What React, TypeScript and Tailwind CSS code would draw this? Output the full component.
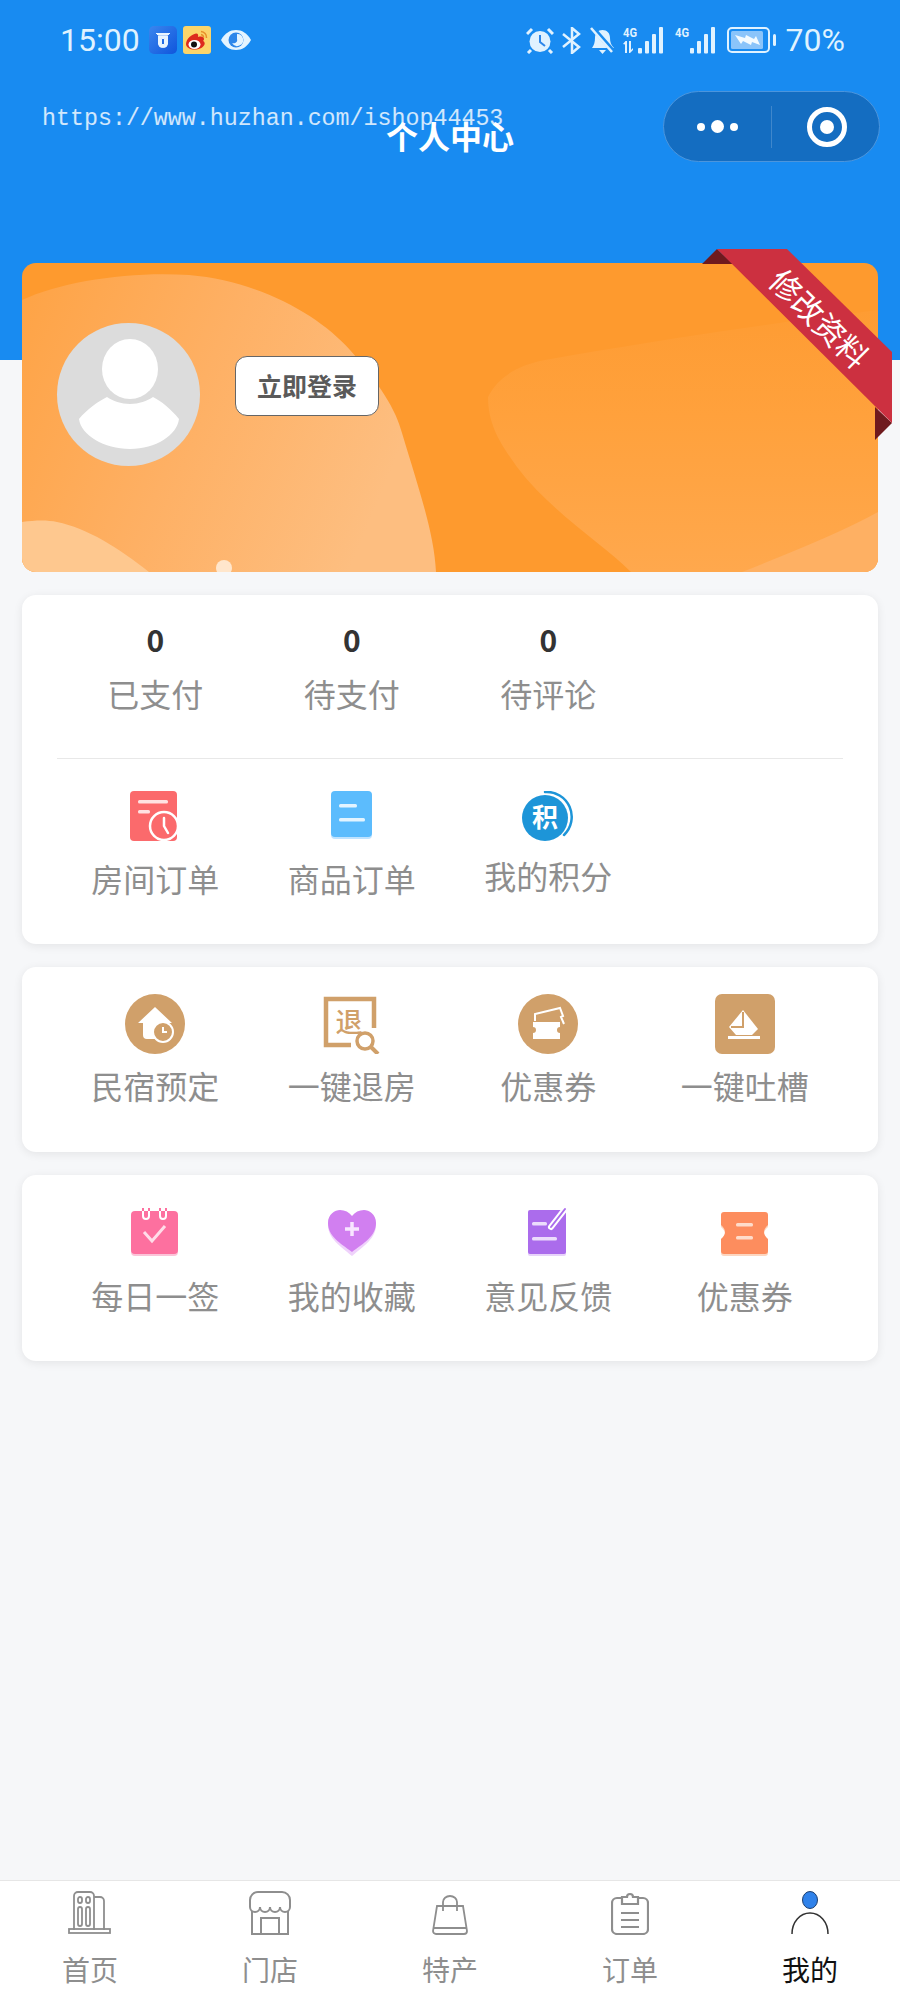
import React from "react";

const cjk = `font-['Noto_Sans_CJK_SC','Noto_Sans',sans-serif]`;

// --- status bar icons ---
const AppBadge = () => (
  <svg width="28" height="28" viewBox="0 0 28 28">
    <defs>
      <linearGradient id="appg" x1="0" y1="0" x2="1" y2="1">
        <stop offset="0" stopColor="#3a86ee" />
        <stop offset="1" stopColor="#0f55dc" />
      </linearGradient>
    </defs>
    <rect width="28" height="28" rx="5" fill="url(#appg)" />
    <path d="M7 7l2 2h10l2-2M9.500 10h9v8a4 4 0 0 1-4 3.500h-1a4 4 0 0 1-4-3.500zM12.500 12.500v6h3v-6z" fill="#e8f5ff" fillRule="evenodd" stroke="#e8f5ff" strokeWidth="1" />
  </svg>
);

const WeiboBadge = () => (
  <svg width="28" height="28" viewBox="0 0 28 28">
    <rect width="28" height="28" rx="3" fill="#fbd56a" />
    <path d="M3 18c0-5 6-10 10-10.500 2-.2 2.500 1.500 2 3.500 3-1 6-.5 6 2 0 1-1 2-1 2 1.500.5 2 2 1.500 3.500-1 3-5.500 5-10 5-4.500 0-8.500-2-8.500-5.500z" fill="#dd2a1d" />
    <ellipse cx="11.500" cy="18.500" rx="6" ry="4.500" fill="#fff" />
    <circle cx="11" cy="18.500" r="3" fill="#111" />
    <path d="M18 5.500a6 6 0 0 1 5.500 6.500M18 8.500a3 3 0 0 1 2.500 3" fill="none" stroke="#e8902a" strokeWidth="1.500" />
  </svg>
);

const EyeIcon = () => (
  <svg width="32" height="22" viewBox="0 0 32 22">
    <path d="M1 11C5 4 10 1 16 1s11 3 15 10c-4 7-9 10-15 10S5 18 1 11z" fill="#e4f4ff" />
    <circle cx="16" cy="11" r="7.500" fill="#2c86ea" />
    <path d="M17 5a6 6 0 1 1-5 9c3 1 6-1 5-4z" fill="#e4f4ff" />
  </svg>
);

const AlarmIcon = () => (
  <svg width="28" height="27" viewBox="0 0 28 27">
    <circle cx="14" cy="14.500" r="10.500" fill="#e0f2ff" />
    <path d="M14 8v7l5 4" fill="none" stroke="#2c86ea" strokeWidth="2" />
    <path d="M1 7l5-5M27 7l-5-5M5 23l-3 3M23 23l3 3" stroke="#e0f2ff" strokeWidth="3" />
  </svg>
);

const BluetoothIcon = () => (
  <svg width="20" height="27" viewBox="0 0 20 27" fill="none" stroke="#e0f2ff" strokeWidth="2.500">
    <path d="M1 7l16 13-7 6V1l7 6L1 20" />
  </svg>
);

const BellOffIcon = () => (
  <svg width="25" height="27" viewBox="0 0 25 27">
    <path d="M2 21c2-3 3-6 3-10 0-5 3-8 7.500-8s7.500 3 7.500 8c0 4 1 7 4 10z" fill="#e0f2ff" />
    <path d="M9 23h7l-3.500 4z" fill="#e0f2ff" />
    <path d="M2 0l21 24" stroke="#1a8cf0" strokeWidth="4.500" />
    <path d="M1 1l21 24" stroke="#e0f2ff" strokeWidth="2.500" />
  </svg>
);

const SignalIcon = ({ arrows }: { arrows?: boolean }) => (
  <svg width="43" height="28" viewBox="0 0 43 28" fill="#e0f2ff">
    <text x="0" y="11" fontSize="13" fontWeight="700" textLength="14" lengthAdjust="spacingAndGlyphs" fontFamily="Roboto, sans-serif">4G</text>
    {arrows && <path d="M0 18l2.500-3h1.500v12H2V18.500zM6 15h2v9l2-2v2l-3 3H6z" />}
    <rect x="15" y="22" width="4" height="5.500" rx="1" />
    <rect x="22" y="15" width="4" height="12.500" rx="1" />
    <rect x="29" y="8" width="4" height="19.500" rx="1" />
    <rect x="36" y="1" width="4" height="26.500" rx="1" />
  </svg>
);

const BatteryIcon = () => (
  <svg width="50" height="26" viewBox="0 0 50 26">
    <rect x="1" y="1" width="41" height="24" rx="4" fill="none" stroke="#e0f2ff" strokeWidth="2" />
    <rect x="4" y="4" width="32" height="18" rx="1.500" fill="#8ac4fa" />
    <path d="M8 8l10 3 1-3 8 4 2-3 4 9-8-3-1 3-8-4-2 3z" fill="#f4fbff" />
    <rect x="46" y="7" width="3" height="12" rx="1.500" fill="#e0f2ff" />
  </svg>
);

// --- menu icons ---
const RoomOrderIcon = () => (
  <svg width="50" height="50" viewBox="0 0 50 50">
    <rect width="47" height="50" rx="4" fill="#fb6a6c" />
    <rect x="8" y="9" width="30" height="3.500" rx="1.500" fill="#ffe2e2" />
    <rect x="8" y="19" width="12" height="3.500" rx="1.500" fill="#ffe2e2" />
    <circle cx="34" cy="35" r="14" fill="#fb6a6c" stroke="#fff" strokeWidth="2.500" />
    <path d="M34 27v8l4 7" fill="none" stroke="#fff" strokeWidth="2.500" strokeLinecap="round" />
  </svg>
);

const GoodsOrderIcon = () => (
  <svg width="41" height="48" viewBox="0 0 41 48">
    <rect y="2" width="41" height="46" rx="4" fill="#bfe3ff" />
    <rect width="41" height="46" rx="4" fill="#5cbcfd" />
    <rect x="8" y="13" width="18" height="3.500" rx="1.500" fill="#e3f4ff" />
    <rect x="8" y="27" width="26" height="3.500" rx="1.500" fill="#e3f4ff" />
  </svg>
);

const PointsIcon = () => (
  <svg width="54" height="52" viewBox="0 0 54 52">
    <circle cx="24" cy="27" r="23" fill="#1d95d8" />
    <path d="M24 1a25 25 0 0 1 19 43" fill="none" stroke="#1d95d8" strokeWidth="2.500" strokeLinecap="round" />
    <text x="24" y="36" textAnchor="middle" fontSize="26" fontWeight="700" fill="#fff" fontFamily="'Noto Sans CJK SC', sans-serif">积</text>
  </svg>
);

const HomeStayIcon = () => (
  <svg width="60" height="60" viewBox="0 0 60 60">
    <circle cx="30" cy="30" r="30" fill="#d0a06a" />
    <path d="M30 13L13 29h5v12a4 4 0 0 0 4 4h16V29h9z" fill="#fff" />
    <circle cx="38" cy="38" r="10" fill="#d0a06a" stroke="#fff" strokeWidth="2" />
    <path d="M38 33v5h4" fill="none" stroke="#fff" strokeWidth="2" />
  </svg>
);

const CheckoutIcon = () => (
  <svg width="58" height="60" viewBox="0 0 58 60">
    <path d="M28 51H3V5h48v29" fill="none" stroke="#d0a06a" strokeWidth="4.500" />
    <text x="26" y="38" textAnchor="middle" fontSize="27" fill="#d0a06a" fontWeight="500" fontFamily="'Noto Sans CJK SC', sans-serif">退</text>
    <circle cx="42" cy="47" r="8" fill="none" stroke="#d0a06a" strokeWidth="3.500" />
    <path d="M48 53l7 7" stroke="#d0a06a" strokeWidth="4" />
  </svg>
);

const CouponRoundIcon = () => (
  <svg width="60" height="60" viewBox="0 0 60 60">
    <circle cx="30" cy="30" r="30" fill="#d0a06a" />
    <path d="M17 27v-7l25-6 3 8-2 1 3 7" fill="none" stroke="#fff" strokeWidth="2" />
    <path d="M15 28h27v5a3 3 0 0 0 0 6v6H15v-6a3 3 0 0 0 0-6z" fill="#fff" />
  </svg>
);

const FeedbackBoatIcon = () => (
  <svg width="60" height="60" viewBox="0 0 60 60">
    <rect width="60" height="60" rx="7" fill="#d0a06a" />
    <path d="M28 16l15 19-6 6H21l-7-8z" fill="#fff" />
    <path d="M28 18v15H16" fill="none" stroke="#d0a06a" strokeWidth="2" />
    <rect x="13" y="42" width="32" height="3" fill="#fff" />
  </svg>
);

const SignInIcon = () => (
  <svg width="48" height="48" viewBox="0 0 48 48">
    <rect y="6" width="47" height="42" rx="4" fill="#fbc4d8" />
    <rect y="3" width="47" height="43" rx="4" fill="#fd709f" />
    <path d="M12 0v8a3 3 0 0 0 6 0V0M29 0v8a3 3 0 0 0 6 0V0" fill="none" stroke="#fd709f" strokeWidth="2" />
    <path d="M12 3v5a3 3 0 0 0 6 0V3M29 3v5a3 3 0 0 0 6 0V3" fill="none" stroke="#fff" strokeWidth="2" />
    <path d="M13 24l8 9 13-15" fill="none" stroke="#ffdde9" strokeWidth="3" />
  </svg>
);

const FavoriteIcon = () => (
  <svg width="48" height="46" viewBox="0 0 48 46">
    <path d="M24 46C12 36 0 28 0 15 0 5 7 2 12 2c5 0 9 2 12 6 3-4 7-6 12-6 5 0 12 3 12 13 0 13-12 21-24 31z" fill="#efd2fb" />
    <path d="M24 42C12 33 0 26 0 13 0 4 7 0 12 0c5 0 9 2 12 6 3-4 7-6 12-6 5 0 12 4 12 13 0 13-12 20-24 29z" fill="#d17ff0" />
    <path d="M24 12v14M17 19h14" stroke="#f8e6ff" strokeWidth="3.500" />
  </svg>
);

const FeedbackIcon = () => (
  <svg width="40" height="49" viewBox="0 0 40 49">
    <rect y="5" width="38" height="44" rx="2" fill="#e7d3fa" />
    <rect y="3" width="38" height="44" rx="2" fill="#ab6cec" />
    <rect x="4" y="15" width="15" height="3.500" rx="1.500" fill="#ecdcfc" />
    <rect x="4" y="30" width="25" height="3.500" rx="1.500" fill="#ecdcfc" />
    <path d="M23 20L37 2" stroke="#fff" strokeWidth="6" strokeLinecap="round" />
    <path d="M23 20L37 2" stroke="#ab6cec" strokeWidth="2" strokeLinecap="round" />
  </svg>
);

const TicketIcon = () => (
  <svg width="49" height="44" viewBox="0 0 49 44">
    <path d="M4 2h41a3 3 0 0 1 3 3v10q-8 7 0 14v12a3 3 0 0 1-3 3H4a3 3 0 0 1-3-3V29q8-7 0-14V5a3 3 0 0 1 3-3z" fill="#fcd6c0" />
    <path d="M4 0h41a3 3 0 0 1 3 3v10q-8 7 0 14v12a3 3 0 0 1-3 3H4a3 3 0 0 1-3-3V27q8-7 0-14V3a3 3 0 0 1 3-3z" fill="#fd8d5e" />
    <rect x="16" y="11" width="17" height="3.500" rx="1.500" fill="#fedccb" />
    <rect x="16" y="24" width="17" height="3.500" rx="1.500" fill="#fedccb" />
  </svg>
);

// --- tab bar icons ---
const TabHome = () => (
  <svg width="44" height="44" viewBox="0 0 44 44" fill="none" stroke="#8e8e8e" strokeWidth="1.800">
    <path d="M6 39V5a4 4 0 0 1 4-4h12a4 4 0 0 1 4 4v34M26 6h6a4 4 0 0 1 4 4v29" />
    <rect x="1" y="38" width="41" height="4" />
    <rect x="10" y="6" width="4" height="6" rx="2" />
    <rect x="18" y="6" width="4" height="6" rx="2" />
    <rect x="10" y="16" width="4" height="19" rx="2" />
    <rect x="18" y="16" width="4" height="19" rx="2" />
  </svg>
);

const TabStore = () => (
  <svg width="44" height="44" viewBox="0 0 44 44" fill="none" stroke="#8e8e8e" strokeWidth="2">
    <path d="M2 16V9a8 8 0 0 1 8-8h24a8 8 0 0 1 8 8v7a5 5 0 0 1-10 0 5 5 0 0 1-10 0 5 5 0 0 1-10 0 5 5 0 0 1-10 0z" />
    <path d="M4 20v23h36V20M13 43V27h18v16" />
  </svg>
);

const TabBag = () => (
  <svg width="38" height="40" viewBox="0 0 38 40" fill="none" stroke="#8e8e8e" strokeWidth="1.800">
    <path d="M6 11h26l4 25a3 3 0 0 1-3 3H5a3 3 0 0 1-3-3z" />
    <path d="M12 16V7a7 6 0 0 1 14 0v9M2 33h34" />
  </svg>
);

const TabOrder = () => (
  <svg width="38" height="44" viewBox="0 0 38 44" fill="none" stroke="#8e8e8e" strokeWidth="2.200">
    <path d="M11 7H6a5 5 0 0 0-5 5v26a5 5 0 0 0 5 5h26a5 5 0 0 0 5-5V12a5 5 0 0 0-5-5h-5" />
    <path d="M11 13V6h5a3 3 0 0 1 6 0h5v7z" />
    <path d="M10 22h18M10 29h18M10 36h18" />
  </svg>
);

const TabMine = () => (
  <svg width="38" height="44" viewBox="0 0 38 44">
    <ellipse cx="19" cy="9" rx="7.500" ry="8.500" fill="#3082ea" stroke="#1d3f70" strokeWidth="1" />
    <path d="M1 43c0-12 8-21 18-21s18 9 18 21" fill="none" stroke="#333" strokeWidth="1.500" />
  </svg>
);

const stats = [
  { value: "0", label: "已支付" },
  { value: "0", label: "待支付" },
  { value: "0", label: "待评论" },
];

function MenuItem({ icon, label, iconBox, labelClass }: { icon: React.ReactNode; label: string; iconBox: string; labelClass: string }) {
  return (
    <div className="flex flex-col items-center">
      <div className={`flex justify-center ${iconBox}`}>{icon}</div>
      <div className={`text-[32px] leading-[48px] text-[#8e8e8e] whitespace-nowrap ${labelClass}`}>{label}</div>
    </div>
  );
}

function Card({ className, children }: { className: string; children: React.ReactNode }) {
  return <div className={`rounded-[14px] bg-white shadow-[0_2px_10px_rgba(0,0,0,0.08)] ${className}`}>{children}</div>;
}

export default function App() {
  const tabs = [
    { label: "首页", icon: <TabHome /> },
    { label: "门店", icon: <TabStore /> },
    { label: "特产", icon: <TabBag /> },
    { label: "订单", icon: <TabOrder /> },
    { label: "我的", icon: <TabMine />, active: true },
  ];

  return (
    <div className={`relative flex min-h-[2000px] w-[900px] flex-col overflow-hidden bg-[#f6f7f9] ${cjk}`}>
      {/* header */}
      <div className="h-[360px] bg-[#188bf1] pt-[24px]">
        <div className="flex h-[32px] items-center justify-between pl-[60px] pr-[55px] font-['Roboto',sans-serif] text-[32px] text-[#dff2ff]">
          <div className="flex items-center">
            <span className="mr-[9px]">15:00</span>
            <AppBadge />
            <span className="ml-[6px]"><WeiboBadge /></span>
            <span className="ml-[9px]"><EyeIcon /></span>
          </div>
          <div className="flex items-center">
            <AlarmIcon />
            <span className="ml-[8px]"><BluetoothIcon /></span>
            <span className="ml-[8px]"><BellOffIcon /></span>
            <span className="ml-[8px]"><SignalIcon arrows /></span>
            <span className="ml-[9px]"><SignalIcon /></span>
            <span className="ml-[9px]"><BatteryIcon /></span>
            <span className="ml-[9px]">70%</span>
          </div>
        </div>
        <div className="mt-[35px] grid grid-cols-[1fr_auto_1fr] pr-[20px] pl-[20px]">
          <div />
          <div className="mt-[24px] text-[32px] font-bold leading-[40px] text-white">个人中心</div>
          <div className="flex h-[71px] w-[217px] items-center justify-self-end rounded-full border-[1.500px] border-[#4c95dc] bg-[#146dc1]">
            <div className="flex w-[107px] items-center justify-center gap-[6px]">
              <span className="h-[8px] w-[8px] rounded-full bg-white" />
              <span className="h-[13px] w-[13px] rounded-full bg-white" />
              <span className="h-[8px] w-[8px] rounded-full bg-white" />
            </div>
            <div className="h-[42px] w-px bg-[#3f87cc]" />
            <div className="flex flex-1 items-center justify-center pl-[2px]">
              <div className="flex h-[40px] w-[40px] items-center justify-center rounded-full border-[5px] border-white">
                <span className="h-[14px] w-[14px] rounded-full bg-white" />
              </div>
            </div>
          </div>
        </div>
      </div>

      {/* watermark over the header */}
      <div className="absolute left-[42px] top-[104px] font-['Liberation_Mono',monospace] text-[23.300px] leading-[30px] text-white/80">
        https://www.huzhan.com/ishop44453
      </div>

      <div className="mt-[-97px] flex flex-col gap-[23px] px-[22px]">
        {/* login banner */}
        <div className="relative flex h-[309px] items-start overflow-hidden rounded-[14px] bg-[#fe9a2e] pl-[35px] pt-[60px]">
          <svg className="absolute inset-0" width="856" height="309" viewBox="0 0 856 309">
            <defs>
              <linearGradient id="blob" x1="0" y1="0" x2="1" y2="0.300">
                <stop offset="0" stopColor="#fea345" />
                <stop offset="0.500" stopColor="#feb064" />
                <stop offset="1" stopColor="#fdbe80" />
              </linearGradient>
              <linearGradient id="blobRight" x1="0" y1="0" x2="0" y2="1">
                <stop offset="0" stopColor="#fe9c33" />
                <stop offset="0.400" stopColor="#ffa13c" />
                <stop offset="1" stopColor="#ffa84d" />
              </linearGradient>
            </defs>
            <path d="M0 37C40 18 110 8 167 12c70 6 130 40 161 75 30 34 46 60 52 83 18 60 32 100 34 139H0z" fill="url(#blob)" />
            <path d="M0 259c14-2 26-2 35 0 30 6 62 26 92 50H0z" fill="#fec88f" />
            <path d="M466 134c10-20 30-32 57-37 100-18 220-36 333-50v262H609c-30-30-80-60-114-105-14-20-29-40-29-70z" fill="url(#blobRight)" />
            <path d="M720 309c50-20 100-40 136-60v60z" fill="#feb063" />
            <ellipse cx="202" cy="305" rx="8" ry="8" fill="#ffe6cc" />
          </svg>

          <div className="relative h-[143px] w-[143px] overflow-hidden rounded-full bg-[#dcdcdc]">
            <svg width="143" height="143" viewBox="0 0 143 143">
              <ellipse cx="73" cy="46" rx="28" ry="30" fill="#fff" />
              <path d="M22 96c8-10 20-18 28-22 6 4 14 7 23 7s17-3 23-7c8 4 18 12 26 22-2 16-23 30-49 30s-49-14-51-30z" fill="#fff" />
            </svg>
          </div>
          <div className="relative ml-[35px] mt-[33px] flex h-[60px] w-[144px] items-center justify-center rounded-[12px] border border-[#666] bg-white text-[25px] font-bold text-[#5a5a5a]">
            立即登录
          </div>
        </div>

        {/* orders */}
        <Card className="px-[35px] pt-[22px] pb-[42px]">
          <div className="grid grid-cols-4">
            {stats.map((s) => (
              <div key={s.label} className="flex flex-col items-center">
                <div className="text-[30px] font-bold leading-[44px] text-[#333]">{s.value}</div>
                <div className="mt-[8px] text-[32px] leading-[48px] text-[#8e8e8e]">{s.label}</div>
              </div>
            ))}
          </div>
          <div className="mt-[41px] h-px bg-[#e8e8e8]" />
          <div className="mt-[32px] grid grid-cols-4">
            <MenuItem icon={<RoomOrderIcon />} label="房间订单" iconBox="h-[50px]" labelClass="mt-[13px]" />
            <MenuItem icon={<GoodsOrderIcon />} label="商品订单" iconBox="h-[50px]" labelClass="mt-[13px]" />
            <MenuItem icon={<PointsIcon />} label="我的积分" iconBox="h-[50px]" labelClass="mt-[10px]" />
          </div>
        </Card>

        <Card className="grid grid-cols-4 px-[35px] pt-[27px] pb-[43px]">
          <MenuItem icon={<HomeStayIcon />} label="民宿预定" iconBox="h-[60px]" labelClass="mt-[7px]" />
          <MenuItem icon={<CheckoutIcon />} label="一键退房" iconBox="h-[60px]" labelClass="mt-[7px]" />
          <MenuItem icon={<CouponRoundIcon />} label="优惠券" iconBox="h-[60px]" labelClass="mt-[7px]" />
          <MenuItem icon={<FeedbackBoatIcon />} label="一键吐槽" iconBox="h-[60px]" labelClass="mt-[7px]" />
        </Card>

        <Card className="grid grid-cols-4 px-[35px] pt-[32px] pb-[42px]">
          <MenuItem icon={<SignInIcon />} label="每日一签" iconBox="h-[49px] items-end" labelClass="mt-[15px]" />
          <MenuItem icon={<FavoriteIcon />} label="我的收藏" iconBox="h-[49px] items-end" labelClass="mt-[15px]" />
          <MenuItem icon={<FeedbackIcon />} label="意见反馈" iconBox="h-[49px] items-end" labelClass="mt-[15px]" />
          <MenuItem icon={<TicketIcon />} label="优惠券" iconBox="h-[49px] items-end" labelClass="mt-[15px]" />
        </Card>
      </div>

      {/* tab bar */}
      <div className="mt-auto grid h-[120px] grid-cols-5 border-t border-[#e6e6e6] bg-white pt-[11px]">
        {tabs.map((t) => (
          <div key={t.label} className="flex flex-col items-center">
            <div className="flex h-[43px] items-end">{t.icon}</div>
            <div className={`mt-[16px] text-[28px] leading-[36px] ${t.active ? "text-[#111]" : "text-[#8e8e8e]"}`}>{t.label}</div>
          </div>
        ))}
      </div>

      {/* ribbon over the banner corner */}
      <svg className="absolute left-[700px] top-[248px]" width="194" height="194" viewBox="700 248 194 194">
        <path d="M702 264l15-15 16 15z" fill="#6f1a1e" />
        <path d="M875 407l17 16-17 17z" fill="#6f1a1e" />
        <path d="M717 249h70l105 103v71z" fill="#cc3040" />
      </svg>
      <span className="absolute left-[756px] top-[296px] w-[128px] rotate-45 text-center text-[31px] leading-[44px] whitespace-nowrap text-white">
        修改资料
      </span>
    </div>
  );
}
